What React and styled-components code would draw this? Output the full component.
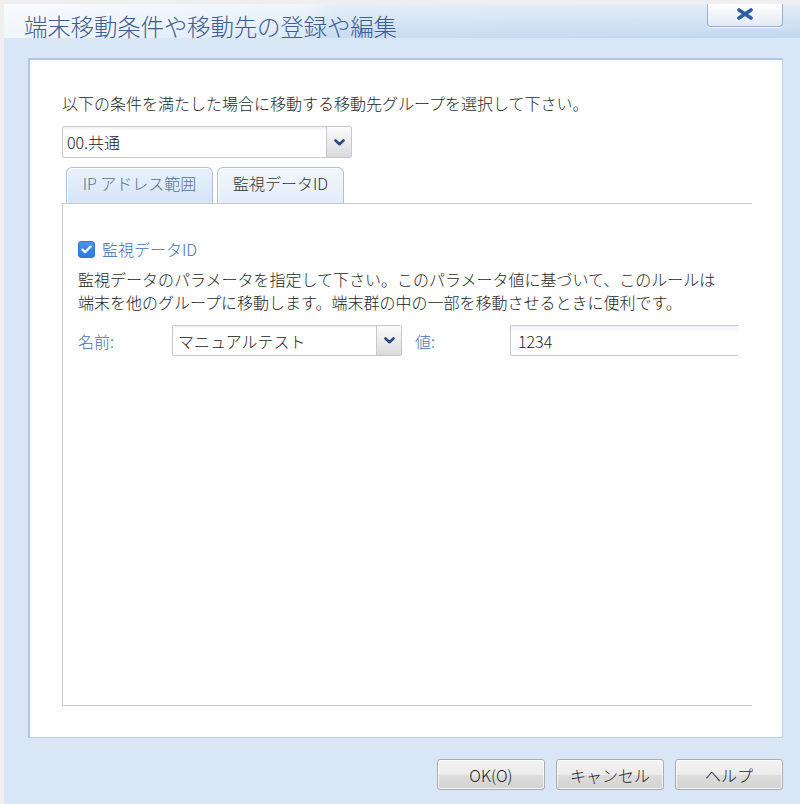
import styled, { createGlobalStyle } from "styled-components";

const GlobalStyle = createGlobalStyle`
  html, body {
    margin: 0;
    padding: 0;
    background: #efefef;
  }
  body {
    font-family: "Noto Sans CJK JP", "Noto Sans", sans-serif;
    font-weight: 300;
    color: #1e1e1e;
  }
  * {
    box-sizing: border-box;
  }
`;

const Window = styled.div`
  margin: 4px 0 0 4px;
  width: 796px;
  height: 800px;
  background: #d9e6f6;
  display: flex;
  flex-direction: column;
  overflow: hidden;
`;

const TitleBar = styled.div`
  height: 54px;
  flex: none;
  display: flex;
  justify-content: space-between;
  align-items: flex-start;
  background:
    linear-gradient(180deg, rgba(255, 255, 255, 0.55) 0%, rgba(255, 255, 255, 0) 100%) top / 100% 34px no-repeat,
    linear-gradient(100deg, #f0f6fd 0%, #dce8f7 38%, #c9dcf2 41%, #c2d8f0 100%) top / 100% 34px no-repeat,
    #d9e6f6;
`;

const Title = styled.div`
  padding: 6px 0 0 20px;
  font-size: 23.5px;
  line-height: 32px;
  color: #3a5d95;
  letter-spacing: -0.2px;
`;

const CloseButton = styled.div`
  width: 76px;
  height: 23px;
  margin-right: 17px;
  border: 1px solid #9cb0cc;
  border-top: none;
  border-radius: 0 0 4px 4px;
  background: linear-gradient(180deg, #ffffff 0%, #f1f5fa 50%, #e2eaf4 100%);
  box-shadow: 0 1px 0 rgba(255, 255, 255, 0.8);
  display: flex;
  align-items: center;
  justify-content: center;
  padding-bottom: 2px;
`;

const Panel = styled.div`
  margin-left: 24px;
  width: 755px;
  height: 680px;
  flex: none;
  background: #ffffff;
  border: 1px solid #bcd1ee;
  border-top: 2px solid #adc6ec;
  border-left: 2px solid #adc6ec;
  padding: 32px 30px 0 32px;
  display: flex;
  flex-direction: column;
`;

const Text = styled.div`
  font-size: 16px;
  line-height: ${(p) => p.$lh || 22}px;
  color: #1e1e1e;
  margin-top: ${(p) => p.$mt || 0}px;
  white-space: nowrap;
`;

const SelectBox = styled.div`
  display: flex;
  width: ${(p) => p.$w}px;
  height: ${(p) => p.$h}px;
  margin-top: ${(p) => p.$mt || 0}px;
  border: 1px solid #c5c7d7;
  border-radius: 2px;
  background: #ffffff;
  box-shadow: inset 0 2px 2px rgba(0, 0, 0, 0.05);
  flex: none;
`;

const SelectValue = styled.div`
  flex: 1;
  display: flex;
  align-items: center;
  padding-left: ${(p) => p.$pl || 5}px;
  font-size: 16px;
  color: #222;
`;

const ArrowButton = styled.div`
  width: 25px;
  border-left: 1px solid #c5c7d7;
  background: linear-gradient(180deg, #fbfbfb 0%, #ececec 50%, #dadada 100%);
  display: flex;
  align-items: center;
  justify-content: center;
`;

const TabRow = styled.div`
  display: flex;
  gap: 4px;
  margin-top: 9px;
  padding-left: 4px;
  height: 36px;
  flex: none;
`;

const Tab = styled.div`
  width: ${(p) => p.$w}px;
  height: 36px;
  border: 1px solid #a9c1e4;
  border-bottom: none;
  border-radius: 6px 6px 0 0;
  background: ${(p) =>
    p.$active
      ? "linear-gradient(180deg, #e9f1fc 0%, #d7e5f7 100%)"
      : "linear-gradient(180deg, #f3f7fd 0%, #e2ecf9 100%)"};
  color: ${(p) => (p.$active ? "#56719c" : "#333")};
  font-size: 16px;
  display: flex;
  justify-content: center;
  padding-top: 4px;
  line-height: 22px;
  box-shadow: inset 1px 1px 0 rgba(255, 255, 255, 0.8);
`;

const TabPanel = styled.div`
  height: 503px;
  flex: none;
  border: 1px solid #c9c9c9;
  border-right: none;
  padding: 34px 0 0 15px;
  display: flex;
  flex-direction: column;
`;

const CheckRow = styled.label`
  display: flex;
  align-items: center;
  gap: 7px;
  height: 22px;
  font-size: 16px;
  color: #4170b6;
`;

const CheckBox = styled.span`
  width: 17px;
  height: 17px;
  border-radius: 3px;
  border: 1px solid #2f74d6;
  background: linear-gradient(180deg, #4b92ea 0%, #2f79de 100%);
  display: flex;
  align-items: center;
  justify-content: center;
`;

const FormRow = styled.div`
  display: flex;
  align-items: center;
  margin-top: 11px;
  height: 31px;
`;

const FieldLabel = styled.div`
  width: ${(p) => p.$w}px;
  margin-left: ${(p) => p.$ml || 0}px;
  font-size: 16px;
  color: #4170b6;
  flex: none;
`;

const TextInput = styled.div`
  width: 228px;
  height: 31px;
  border: 1px solid #c5c7d7;
  border-right: none;
  border-radius: 2px 0 0 2px;
  background: linear-gradient(180deg, #f3f3f6 0%, #ffffff 25%);
  display: flex;
  align-items: center;
  padding-left: 7px;
  font-size: 16px;
  color: #222;
`;

const Footer = styled.div`
  flex: 1;
  display: flex;
  justify-content: flex-end;
  align-items: flex-start;
  gap: 11px;
  padding: 21px 17px 0 0;
`;

const Button = styled.button`
  width: 108px;
  height: 31px;
  border: 1px solid #acacac;
  border-radius: 3px;
  background: linear-gradient(180deg, #f3f3f3 0%, #ebebeb 50%, #dddddd 51%, #d3d3d3 100%);
  box-shadow: inset 0 0 0 1px rgba(255, 255, 255, 0.7);
  font-family: "Noto Sans CJK JP", "Noto Sans", sans-serif;
  font-weight: 300;
  font-size: 16px;
  color: #1e1e1e;
  padding: 0;
  display: flex;
  align-items: center;
  justify-content: center;
`;

function Chevron() {
  return (
    <svg width="11" height="7" viewBox="0 0 11 7">
      <path d="M1.5 1.5 L5.5 5.2 L9.5 1.5" fill="none" stroke="#2b4b85" strokeWidth="2.6" strokeLinecap="round" strokeLinejoin="round" />
    </svg>
  );
}

function Select({ value, width, height, mt, pl }) {
  return (
    <SelectBox $w={width} $h={height} $mt={mt}>
      <SelectValue $pl={pl}>{value}</SelectValue>
      <ArrowButton>
        <Chevron />
      </ArrowButton>
    </SelectBox>
  );
}

export default function App() {
  return (
    <>
      <GlobalStyle />
      <Window>
        <TitleBar>
          <Title>端末移動条件や移動先の登録や編集</Title>
          <CloseButton>
            <svg width="18" height="12" viewBox="0 0 18 12">
              <path d="M3 2 L15 10 M15 2 L3 10" stroke="#2c5ca6" strokeWidth="3.6" strokeLinecap="round" />
            </svg>
          </CloseButton>
        </TitleBar>
        <Panel>
          <Text>以下の条件を満たした場合に移動する移動先グループを選択して下さい。</Text>
          <Select value="00.共通" width={290} height={32} mt={12} pl={4} />
          <TabRow>
            <Tab $w={147} $active>IP アドレス範囲</Tab>
            <Tab $w={127}>監視データID</Tab>
          </TabRow>
          <TabPanel>
            <CheckRow>
              <CheckBox>
                <svg width="11" height="9" viewBox="0 0 11 9">
                  <path d="M1.5 4.6 L4.2 7.2 L9.5 1.6" fill="none" stroke="#fff" strokeWidth="2.2" strokeLinecap="round" strokeLinejoin="round" />
                </svg>
              </CheckBox>
              監視データID
            </CheckRow>
            <Text $lh={23} $mt={8}>
              監視データのパラメータを指定して下さい。このパラメータ値に基づいて、このルールは
              <br />
              端末を他のグループに移動します。端末群の中の一部を移動させるときに便利です。
            </Text>
            <FormRow>
              <FieldLabel $w={94}>名前:</FieldLabel>
              <Select value="マニュアルテスト" width={230} height={31} pl={5} />
              <FieldLabel $w={95} $ml={13}>値:</FieldLabel>
              <TextInput>1234</TextInput>
            </FormRow>
          </TabPanel>
        </Panel>
        <Footer>
          <Button>OK(O)</Button>
          <Button>キャンセル</Button>
          <Button>ヘルプ</Button>
        </Footer>
      </Window>
    </>
  );
}
